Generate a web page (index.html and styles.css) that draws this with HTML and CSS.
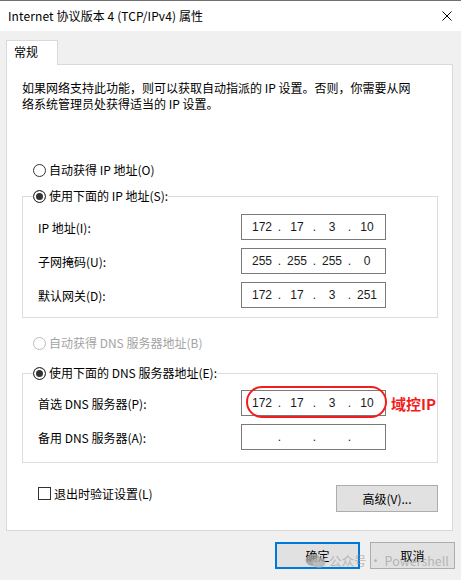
FILE: index.html
```html
<!DOCTYPE html>
<html lang="zh-CN">
<head>
  <meta charset="UTF-8">
  <meta name="viewport" content="width=device-width, initial-scale=1.0">
  <title>Internet 协议版本 4 (TCP/IPv4) 属性</title>
  <link rel="stylesheet" href="styles.css">
</head>
<body>

  <div class="window">

    <!-- Title bar -->
    <div class="titlebar">
      <span class="title">Internet 协议版本 4 (TCP/IPv4) 属性</span>
      <svg class="close" width="10" height="10" viewBox="0 0 10 10">
        <path d="M0.5 0.5L9.5 9.5M9.5 0.5L0.5 9.5" stroke="#000" stroke-width="1" fill="none"/>
      </svg>
    </div>

    <div class="client">
      <div class="tabs">
        <div class="tab">常规</div>
      </div>

      <div class="panel">
        <p class="desc">如果网络支持此功能，则可以获取自动指派的 IP 设置。否则，你需要从网<br>络系统管理员处获得适当的 IP 设置。</p>

        <!-- IP address -->
        <label class="radio first"><span class="circle"></span>自动获得 IP 地址(O)</label>
        <fieldset class="group group-ip">
          <legend><label class="radio"><span class="circle checked"></span>使用下面的 IP 地址(S):</label></legend>
          <div class="row">
            <span class="label">IP 地址(I):</span>
            <div class="ip"><span class="oct">172</span><span class="sep">.</span><span class="oct">17</span><span class="sep">.</span><span class="oct">3</span><span class="sep">.</span><span class="oct">10</span></div>
          </div>
          <div class="row">
            <span class="label">子网掩码(U):</span>
            <div class="ip"><span class="oct">255</span><span class="sep">.</span><span class="oct">255</span><span class="sep">.</span><span class="oct">255</span><span class="sep">.</span><span class="oct">0</span></div>
          </div>
          <div class="row">
            <span class="label">默认网关(D):</span>
            <div class="ip"><span class="oct">172</span><span class="sep">.</span><span class="oct">17</span><span class="sep">.</span><span class="oct">3</span><span class="sep">.</span><span class="oct">251</span></div>
          </div>
        </fieldset>

        <!-- DNS -->
        <label class="radio disabled"><span class="circle"></span>自动获得 DNS 服务器地址(B)</label>
        <fieldset class="group group-dns">
          <legend><label class="radio"><span class="circle checked"></span>使用下面的 DNS 服务器地址(E):</label></legend>
          <div class="row">
            <span class="label">首选 DNS 服务器(P):</span>
            <div class="ip"><span class="oct">172</span><span class="sep">.</span><span class="oct">17</span><span class="sep">.</span><span class="oct">3</span><span class="sep">.</span><span class="oct">10</span>
              <span class="mark"></span>
              <span class="mark-text">域控IP</span>
            </div>
          </div>
          <div class="row">
            <span class="label">备用 DNS 服务器(A):</span>
            <div class="ip"><span class="oct"></span><span class="sep">.</span><span class="oct"></span><span class="sep">.</span><span class="oct"></span><span class="sep">.</span><span class="oct"></span></div>
          </div>
        </fieldset>

        <div class="bottom-row">
          <label class="check"><span class="box"></span>退出时验证设置(L)</label>
          <button class="btn btn-adv">高级(V)...</button>
        </div>
      </div>

      <!-- Dialog buttons -->
      <div class="actions">
        <button class="btn btn-ok">确定</button>
        <button class="btn">取消</button>
      </div>
    </div>

    <!-- Watermark -->
    <div class="watermark">
      <svg width="21" height="14" viewBox="0 0 21 14">
        <ellipse cx="8" cy="6" rx="7.5" ry="6" fill="#9a9a9a"/>
        <ellipse cx="14" cy="8.5" rx="6.5" ry="5.2" fill="#b4b4b4"/>
      </svg>
      <span>公众号 · Powershell</span>
    </div>

  </div>

</body>
</html>
```

FILE: styles.css
```css
/* Reset */
* {
  box-sizing: border-box;
}

body {
  margin: 0;
  font-family: "Noto Sans CJK SC", "Noto Sans", sans-serif;
  font-size: 12px;
  color: #000;
  background: #f0f0f0;
}

.window {
  position: relative;
  width: 461px;
  height: 580px;
  overflow: hidden;
}

/* Title bar */
.titlebar {
  height: 31px;
  border-top: 1px solid #707070;
  background: #fff;
  display: flex;
  align-items: center;
  justify-content: space-between;
  padding: 0 9px 1px 8px;
}

.title {
  letter-spacing: 0.1px;
}

.close {
  display: block;
}

/* Client area */
.client {
  padding: 9px 8px 0 6px;
}

.tabs {
  display: flex;
}

.tab {
  position: relative;
  z-index: 1;
  width: 52px;
  height: 25px;
  margin-bottom: -1px;
  padding: 2px 0 0 7px;
  line-height: 17px;
  background: #fff;
  border: 1px solid #d9d9d9;
  border-bottom: none;
}

.panel {
  height: 467px;
  padding: 0 14px 0 15px;
  background: #fff;
  border: 1px solid #d9d9d9;
}

.desc {
  margin: 15px 0 0;
  line-height: 16px;
}

/* Radio buttons */
.radio {
  display: flex;
  align-items: center;
  height: 16px;
  line-height: 16px;
  white-space: nowrap;
}

.radio.first {
  margin: 50px 0 0 11px;
}

.radio.disabled {
  margin: 17px 0 0 11px;
  color: #a3a3a3;
}

.circle {
  flex: none;
  width: 13px;
  height: 13px;
  margin-right: 3px;
  border: 1px solid #333;
  border-radius: 50%;
  background: #fff;
}

.circle.checked {
  background: #333;
  box-shadow: inset 0 0 0 2px #fff;
}

.radio.disabled .circle {
  border-color: #bcbcbc;
}

/* Group boxes */
.group {
  margin: 0;
  min-width: 0;
  border: 1px solid #dcdcdc;
  padding: 10px 0 9px 15px;
}

.group-ip {
  margin-top: 10px;
}

.group-dns {
  margin-top: 14px;
  padding: 9px 0 12px 15px;
}

.group legend {
  padding: 0;
  margin-left: -5px;
  background: #fff;
}

.row {
  display: flex;
  align-items: center;
  height: 26px;
}

.row + .row {
  margin-top: 8px;
}

.label {
  width: 203px;
  flex: none;
}

/* IP address field */
.ip {
  position: relative;
  display: flex;
  align-items: center;
  width: 145px;
  height: 26px;
  padding-left: 5px;
  border: 1px solid #7a7a7a;
  font-family: "Liberation Sans", "Noto Sans", sans-serif;
  font-size: 12px;
  color: #1a1a1a;
}

.oct {
  width: 30px;
  text-align: center;
}

.sep {
  width: 5px;
  text-align: center;
}

/* Red annotation */
.mark {
  position: absolute;
  left: 4px;
  top: -5px;
  width: 141px;
  height: 32px;
  border: 2px solid #f41b1b;
  border-radius: 16px;
}

.mark-text {
  position: absolute;
  left: calc(100% + 6px);
  top: 50%;
  transform: translateY(-50%);
  font-family: "Noto Sans CJK SC", sans-serif;
  font-size: 15px;
  font-weight: bold;
  color: #f41b1b;
  white-space: nowrap;
}

/* Bottom row */
.bottom-row {
  display: flex;
  justify-content: space-between;
  align-items: flex-start;
  margin-top: 22px;
}

.check {
  display: flex;
  align-items: center;
  height: 16px;
  margin-left: 16px;
}

.box {
  width: 13px;
  height: 13px;
  margin-right: 3px;
  border: 1px solid #333;
  background: #fff;
}

.btn {
  height: 27px;
  padding: 0;
  font-family: inherit;
  font-size: 12px;
  color: #000;
  background: #e1e1e1;
  border: 1px solid #adadad;
}

.btn-adv {
  width: 102px;
}

.actions {
  display: flex;
  justify-content: flex-end;
  gap: 10px;
  margin: 11px -2px 0 0;
}

.actions .btn {
  width: 85px;
}

.btn-ok {
  border: 2px solid #0078d7;
}

/* Watermark overlay */
.watermark {
  position: absolute;
  left: 305px;
  top: 551px;
  display: flex;
  align-items: center;
  gap: 3px;
  font-size: 12.5px;
  color: rgba(150, 150, 150, 0.75);
  opacity: 0.8;
  pointer-events: none;
}
```
